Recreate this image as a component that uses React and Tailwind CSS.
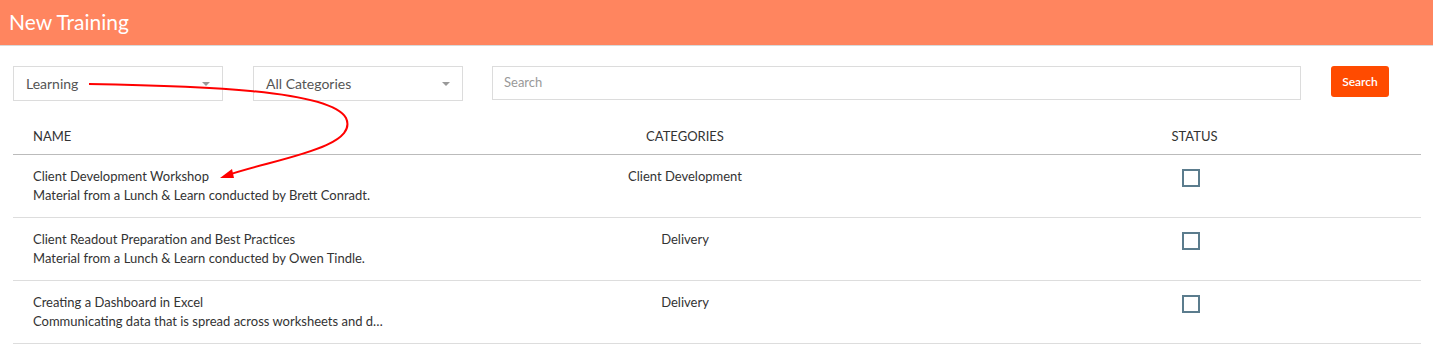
import React from "react";

const rows = [
  {
    title: "Client Development Workshop",
    desc: "Material from a Lunch & Learn conducted by Brett Conradt.",
    category: "Client Development",
  },
  {
    title: "Client Readout Preparation and Best Practices",
    desc: "Material from a Lunch & Learn conducted by Owen Tindle.",
    category: "Delivery",
  },
  {
    title: "Creating a Dashboard in Excel",
    desc: "Communicating data that is spread across worksheets and d…",
    category: "Delivery",
  },
];

const Select = ({ label }) => (
  <div className="flex items-center justify-between w-[210px] h-[35px] border border-[#dcdcdc] pl-[12px] pr-[12px] text-[14px] text-[#555]">
    <span>{label}</span>
    <span className="w-0 h-0 border-l-[4px] border-r-[4px] border-t-[4px] border-l-transparent border-r-transparent border-t-[#999]" />
  </div>
);

const App = () => {
  return (
    <div className="relative w-[1433px] h-[352px] bg-white font-['Lato','Noto_Sans',sans-serif] text-[#333]">
      {/* Header */}
      <div className="h-[46px] bg-[#ff855f] border-b border-[#d9d9d9] flex items-center pl-[9px]">
        <h1 className="text-white text-[21px] leading-none -mt-[2px]">New Training</h1>
      </div>

      {/* Filters */}
      <div className="flex items-start mt-[20px] ml-[13px]">
        <Select label="Learning" />
        <div className="ml-[30px]">
          <Select label="All Categories" />
        </div>
        <div className="ml-[29px] w-[809px] h-[34px] border border-[#dcdcdc] flex items-center pl-[11px] text-[13px] text-[#999]">
          Search
        </div>
        <button className="ml-[30px] w-[58px] h-[31px] bg-[#ff4b00] rounded-[3px] text-white text-[12px] font-semibold">
          Search
        </button>
      </div>

      {/* Table */}
      <div className="ml-[13px] w-[1408px] mt-[18px] text-[13px]">
        <div className="grid grid-cols-[397px_550px_461px] h-[36px] items-center border-b border-[#bbb] text-[13px] uppercase">
          <div className="pl-[20px]">Name</div>
          <div className="text-center">Categories</div>
          <div className="text-center pl-[8px]">Status</div>
        </div>
        {rows.map((r) => (
          <div
            key={r.title}
            className="grid grid-cols-[397px_550px_461px] h-[63px] border-b border-[#ddd] pt-[12px] leading-[19px]"
          >
            <div className="pl-[20px]">
              <div>{r.title}</div>
              <div>{r.desc}</div>
            </div>
            <div className="text-center">{r.category}</div>
            <div className="flex justify-center pt-[2px]">
              <span className="w-[18px] h-[18px] border-2 border-[#5b7c8d]" />
            </div>
          </div>
        ))}
      </div>

      {/* Annotation arrow */}
      <svg
        className="absolute left-0 top-0 pointer-events-none"
        width="1433"
        height="352"
        viewBox="0 0 1433 352"
      >
        <path
          d="M89 84 C 200 86, 330 90, 346 118 C 360 148, 270 160, 228 175"
          fill="none"
          stroke="#f00"
          strokeWidth="2"
        />
        <polygon points="220,178 232,169 234,178" fill="#f00" />
      </svg>
    </div>
  );
};

export default App;
